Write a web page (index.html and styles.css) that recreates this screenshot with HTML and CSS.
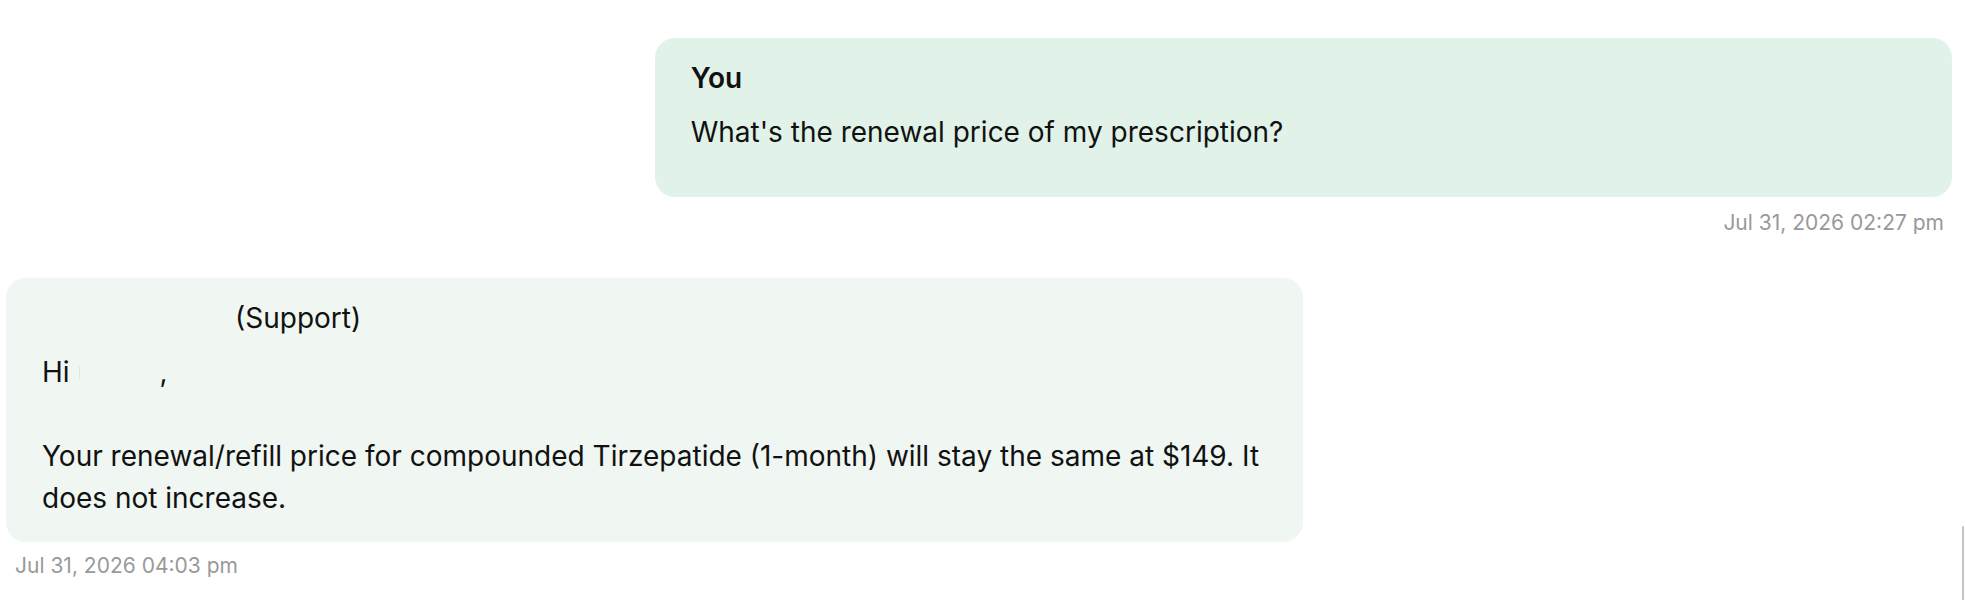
FILE: index.html
```html
<!DOCTYPE html>
<html lang="en">
<head>
<meta charset="utf-8">
<title>Messages</title>
<link rel="stylesheet" href="styles.css">
</head>
<body>
<div class="thread">
  <div class="row row-out">
    <div class="bubble bubble-out">
      <div class="sender sender-out">You</div>
      <div class="text">What's the renewal price of my prescription?</div>
    </div>
    <div class="time time-out">Jul 31, 2026 02:27 pm</div>
  </div>
  <div class="row row-in">
    <div class="bubble bubble-in">
      <div class="sender sender-in"><span class="redact redact-name"></span>(Support)</div>
      <div class="text">Hi <span class="redact redact-first"><span class="sliver"></span></span>,<br><br>Your renewal/refill price for compounded Tirzepatide (1-month) will stay the same at $149. It does not increase.</div>
    </div>
    <div class="time time-in">Jul 31, 2026 04:03 pm</div>
  </div>
</div>
<div class="scroll-thumb"></div>
</body>
</html>
```
FILE: styles.css
```css
html, body {
  margin: 0;
  padding: 0;
  background: #ffffff;
}
body {
  font-family: Inter, "Noto Sans", "Liberation Sans", sans-serif;
  color: #111111;
  width: 1966px;
  height: 600px;
  overflow: hidden;
  position: relative;
}
.thread {
  padding: 38px 14px 0 6px;
  display: flex;
  flex-direction: column;
}
.row {
  display: flex;
  flex-direction: column;
}
.row-out {
  align-items: flex-end;
}
.row-in {
  align-items: flex-start;
  margin-top: 41px;
}
.bubble {
  box-sizing: border-box;
  width: 66.6667%;
  border-radius: 20px;
  padding: 19px 36px 23px 36px;
}
.bubble-out {
  background: #e1f3e8;
  padding-bottom: 44px;
}
.bubble-in {
  background: #f0f6f2;
}
.sender {
  font-size: 28px;
  line-height: 42px;
  margin-bottom: 12px;
}
.sender-out {
  font-weight: 600;
}
.sender-in {
  font-weight: 400;
}
.text {
  font-size: 28px;
  line-height: 42px;
}
.redact {
  display: inline-block;
  height: 1px;
  vertical-align: middle;
  position: relative;
}
.redact-name {
  width: 193px;
}
.redact-first {
  width: 82px;
}
.sliver {
  position: absolute;
  left: 2px;
  top: -8px;
  width: 1px;
  height: 13px;
  background: #dfe5e1;
}
.time {
  font-size: 21px;
  line-height: 28px;
  color: #999999;
}
.time-out {
  margin-top: 12px;
  margin-right: 8px;
}
.time-in {
  margin-top: 10px;
  margin-left: 9px;
}
.scroll-thumb {
  position: absolute;
  right: 2px;
  top: 526px;
  width: 2px;
  height: 74px;
  background: #c4c4c4;
  border-radius: 1px 1px 0 0;
}
```
